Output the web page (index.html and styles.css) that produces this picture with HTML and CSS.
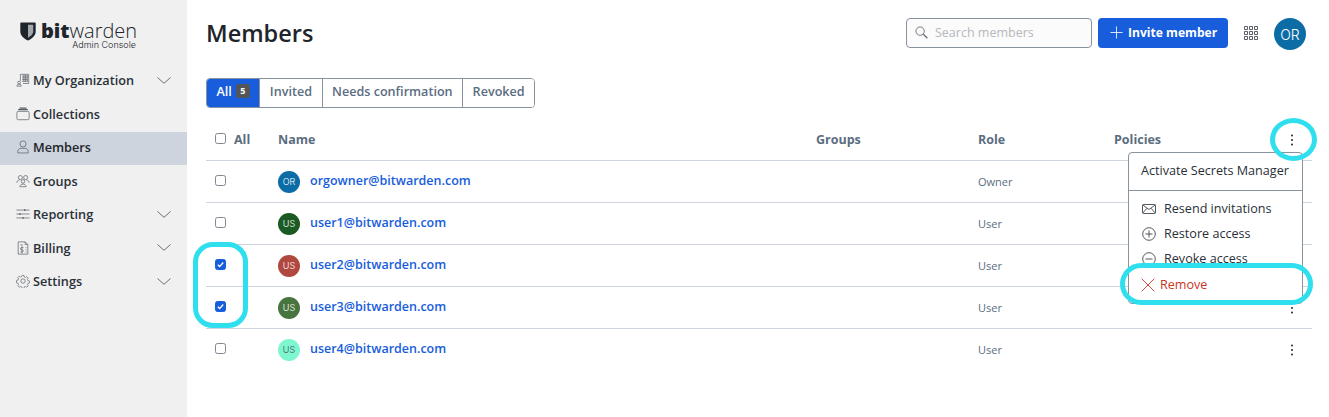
FILE: index.html
```html
<!DOCTYPE html>
<html lang="en">
<head>
<meta charset="utf-8">
<title>Members</title>
<link rel="stylesheet" href="styles.css">
</head>
<body>
<div class="app">
  <aside class="sidebar">
    <div class="logo">
      <svg class="shield" viewBox="0 0 16 19"><path d="M1 0.500h14a.7.7 0 0 1 .7.7v8.300c0 4.600-4.600 7.600-7.700 9-3.100-1.400-7.700-4.400-7.700-9V1.200a.7.7 0 0 1 .7-.7z" fill="#20242b"/><path d="M8 2.800h5.200v6.700c0 2.800-2.900 5-5.200 6.200z" fill="#a4a7ab"/></svg>
      <div class="logo-text">
        <div class="wordmark"><b>bit</b>warden</div>
        <div class="console">Admin Console</div>
      </div>
    </div>
    <nav class="nav">
      <a class="nav-item"><svg class="nav-icon" viewBox="0 0 16 16"><path d="M5 9V1.500h9.500V12H8M7 3.500h6M7 5.500h6M7 7.500h6M7 9.500h6M9 2v8M11 2v8M13 2v8" /><circle cx="3.500" cy="11" r="1.600"/><path d="M1 15c0-3 5-3 5 0z"/></svg><span class="nav-label">My Organization</span><svg class="chev" viewBox="0 0 14 7"><path d="M.5.500 7 6.300 13.500.500"/></svg></a>
      <a class="nav-item"><svg class="nav-icon" viewBox="0 0 16 16"><rect x="1" y="5" width="14" height="9.500" rx="1.500"/><path d="M2.500 3h11M4 1.200h8" stroke-width="1.400"/></svg><span class="nav-label">Collections</span></a>
      <a class="nav-item active"><svg class="nav-icon" viewBox="0 0 16 16"><circle cx="8" cy="4.500" r="3.500"/><path d="M2 14.800v-1.600c0-2.300 2-3.700 3.500-3.700h5c1.500 0 3.500 1.400 3.500 3.700v1.600z"/></svg><span class="nav-label">Members</span></a>
      <a class="nav-item"><svg class="nav-icon" viewBox="0 0 16 16"><circle cx="5" cy="4" r="2.300"/><circle cx="11" cy="4" r="2.300"/><circle cx="8" cy="8.500" r="2"/><path d="M1 10c0-2 1.500-3 3-3M15 10c0-2-1.500-3-3-3M4.500 14.500c0-4 7-4 7 0z"/></svg><span class="nav-label">Groups</span></a>
      <a class="nav-item"><svg class="nav-icon" viewBox="0 0 16 16"><path d="M.5 3.500h15M.5 8h15M.5 12.500h15"/><path d="M10 2.500v2M4.500 7v2M8 11.500v2" stroke-width="1.500"/></svg><span class="nav-label">Reporting</span><svg class="chev" viewBox="0 0 14 7"><path d="M.5.500 7 6.300 13.500.500"/></svg></a>
      <a class="nav-item"><svg class="nav-icon" viewBox="0 0 16 16"><path d="M2.500 1h8l3 3v11h-11zM10.500 1v3h3M5 4.500h3M11 7.500h1M11 10h1M11 12.500h1"/><path d="M8.500 7.500H6c-1 0-1 2.500 0 2.500h1.500c1 0 1 2.500 0 2.500H5M6.800 6v8"/></svg><span class="nav-label">Billing</span><svg class="chev" viewBox="0 0 14 7"><path d="M.5.500 7 6.300 13.500.500"/></svg></a>
      <a class="nav-item"><svg class="nav-icon" viewBox="0 0 16 16"><circle cx="8" cy="8" r="2.500"/><path d="M6.700 1h2.600l.4 2 1.400.6 1.800-1.100 1.800 1.800-1.100 1.800.6 1.400 2 .4v2.600l-2 .4-.6 1.400 1.100 1.800-1.800 1.800-1.800-1.100-1.400.6-.4 2H6.700l-.4-2-1.400-.6-1.800 1.100-1.800-1.800 1.100-1.800-.6-1.400-2-.4V7.200l2-.4.6-1.400-1.100-1.800 1.800-1.800 1.800 1.100 1.400-.6z" transform="translate(.8 .8) scale(.9)"/></svg><span class="nav-label">Settings</span><svg class="chev" viewBox="0 0 14 7"><path d="M.5.500 7 6.300 13.500.500"/></svg></a>
    </nav>
  </aside>

  <main class="main">
    <header class="topbar">
      <h1 class="title">Members</h1>
      <div class="actions">
        <label class="search">
          <svg class="search-icon" viewBox="0 0 14 14"><circle cx="5.500" cy="5.500" r="4.500"/><path d="m9 9 4.300 4.300" stroke-width="1.500"/></svg>
          <span class="search-text">Search members</span>
        </label>
        <button class="invite"><svg class="plus" viewBox="0 0 14 14"><path d="M7 .5v13M.5 7h13"/></svg>Invite member</button>
        <svg class="apps" viewBox="0 0 14 14"><path d="M.5.500h3v3h-3zM5.500.500h3v3h-3zM10.500.500h3v3h-3zM.5 5.500h3v3h-3zM5.500 5.500h3v3h-3zM10.500 5.500h3v3h-3zM.5 10.500h3v3h-3zM5.500 10.500h3v3h-3zM10.500 10.500h3v3h-3z"/></svg>
        <div class="avatar avatar-lg av-or">OR</div>
      </div>
    </header>

    <div class="tabs">
      <button class="tab tab-on">All <span class="badge">5</span></button>
      <button class="tab">Invited</button>
      <button class="tab">Needs confirmation</button>
      <button class="tab">Revoked</button>
    </div>

    <section class="table">
      <div class="row head">
        <div class="check-cell"><span class="box"></span><span>All</span></div>
        <div>Name</div>
        <div>Groups</div>
        <div>Role</div>
        <div>Policies</div>
        <div class="dots-cell"><svg class="dots" viewBox="0 0 4 12"><circle cx="2" cy="1.500" r="1"/><circle cx="2" cy="6" r="1"/><circle cx="2" cy="10.500" r="1"/></svg></div>
      </div>
      <div class="row">
        <div class="check-cell"><span class="box"></span></div>
        <div class="name-cell"><span class="avatar av-or">OR</span><a class="email">orgowner@bitwarden.com</a></div>
        <div></div><div class="role">Owner</div><div></div><div></div>
      </div>
      <div class="row">
        <div class="check-cell"><span class="box"></span></div>
        <div class="name-cell"><span class="avatar av-1">US</span><a class="email">user1@bitwarden.com</a></div>
        <div></div><div class="role">User</div><div></div><div></div>
      </div>
      <div class="row">
        <div class="check-cell"><span class="box box-on"><svg viewBox="0 0 10 10"><path d="M2 5.300 4.100 7.300 8 2.800"/></svg></span></div>
        <div class="name-cell"><span class="avatar av-2">US</span><a class="email">user2@bitwarden.com</a></div>
        <div></div><div class="role">User</div><div></div><div></div>
      </div>
      <div class="row">
        <div class="check-cell"><span class="box box-on"><svg viewBox="0 0 10 10"><path d="M2 5.300 4.100 7.300 8 2.800"/></svg></span></div>
        <div class="name-cell"><span class="avatar av-3">US</span><a class="email">user3@bitwarden.com</a></div>
        <div></div><div class="role">User</div><div></div>
        <div class="dots-cell"><svg class="dots" viewBox="0 0 4 12"><circle cx="2" cy="1.500" r="1"/><circle cx="2" cy="6" r="1"/><circle cx="2" cy="10.500" r="1"/></svg></div>
      </div>
      <div class="row last">
        <div class="check-cell"><span class="box"></span></div>
        <div class="name-cell"><span class="avatar av-4">US</span><a class="email">user4@bitwarden.com</a></div>
        <div></div><div class="role">User</div><div></div>
        <div class="dots-cell"><svg class="dots" viewBox="0 0 4 12"><circle cx="2" cy="1.500" r="1"/><circle cx="2" cy="6" r="1"/><circle cx="2" cy="10.500" r="1"/></svg></div>
      </div>
    </section>
  </main>
</div>

<div class="menu">
  <div class="menu-top">Activate Secrets Manager</div>
  <div class="menu-list">
    <div class="menu-item"><svg class="menu-icon" viewBox="0 0 14 14"><rect x=".5" y="2.500" width="13" height="9" rx="1"/><path d="m.8 3 6.200 4.500L13.200 3M.8 11 5 6.200M13.200 11 9 6.200"/></svg>Resend invitations</div>
    <div class="menu-item"><svg class="menu-icon" viewBox="0 0 14 14"><circle cx="7" cy="7" r="6.300"/><path d="M7 3.500v7M3.500 7h7"/></svg>Restore access</div>
    <div class="menu-item"><svg class="menu-icon" viewBox="0 0 14 14"><circle cx="7" cy="7" r="6.300"/><path d="M3.500 7h7"/></svg>Revoke access</div>
    <div class="menu-item danger"><svg class="x-icon" viewBox="0 0 14 14"><path d="M.7.700l12.600 12.600M13.300.700.700 13.300"/></svg>Remove</div>
  </div>
</div>

<div class="mark mark-dots"></div>
<div class="mark mark-checks"></div>
<div class="mark mark-remove"></div>
</body>
</html>
```

FILE: styles.css
```css
* { box-sizing: border-box; }
html, body { margin: 0; height: 100%; }
body {
  position: relative;
  width: 1329px;
  height: 417px;
  overflow: hidden;
  background: #fff;
  color: #20242b;
  font-family: "Open Sans", "Liberation Sans", sans-serif;
  font-size: 13px;
}
svg { display: block; fill: none; stroke: currentColor; stroke-width: 1; }

.app { display: flex; height: 417px; }

/* sidebar */
.sidebar { width: 187px; flex: none; background: #f0f0f0; }
.logo { display: flex; align-items: flex-start; gap: 5px; padding: 21px 0 0 20px; height: 64.5px; }
.shield { width: 16px; height: 19px; margin-top: 1px; stroke: none; }
.logo-text { width: 96px; }
.wordmark { font-size: 20px; line-height: 19px; font-weight: 300; color: #20242b; white-space: nowrap; }
.wordmark b { font-weight: 800; }
.console { font-family: "Inter", sans-serif; font-size: 9px; line-height: 10px; font-weight: 300; text-align: right; color: #20242b; padding-right: 1px; }
.nav-item { display: flex; align-items: center; height: 33.5px; padding: 0 16px 2px 16px; font-weight: 600; font-size: 12.700px; color: #2a2f37; }
.nav-item.active { background: #cdd4dd; color: #20242b; }
.nav-icon { width: 14px; height: 14px; flex: none; margin-right: 3px; color: #5a5f66; stroke-width: .8; }
.nav-label { flex: 1; }
.chev { width: 14px; height: 7px; color: #5a606a; stroke-width: .9; }

/* main */
.main { flex: 1; min-width: 0; padding: 18px 17px 0 19px; }
.topbar { display: flex; justify-content: space-between; align-items: flex-start; height: 60px; }
.title { margin: 0; font-size: 23.500px; line-height: 30px; font-weight: 600; color: #20242b; }
.actions { display: flex; align-items: flex-start; padding-right: 6px; }
.search { display: flex; align-items: center; width: 186px; height: 30px; padding: 0 0 2px 8px; margin-right: 6px; background: #fbfbfb; border: 1px solid #89929f; border-radius: 4px; }
.search-icon { width: 13px; height: 13px; color: #6a7078; margin-right: 7px; }
.search-text { color: #b5b8bd; font-size: 12.500px; }
.invite { display: flex; align-items: center; width: 130px; height: 30px; padding: 0 0 2px 12px; border: 0; border-radius: 4px; background: #175ddc; color: #fff; font: 700 12.100px "Open Sans", sans-serif; }
.plus { width: 13px; height: 13px; margin-right: 5px; stroke-width: .9; }
.apps { width: 14px; height: 14px; margin: 8px 16px 0 16px; color: #5a5f66; }
.avatar { display: flex; align-items: center; justify-content: center; width: 22px; height: 22px; flex: none; border-radius: 50%; color: #fff; font-size: 9px; font-family: "Inter", sans-serif; font-weight: 300; }
.avatar-lg { width: 32px; height: 32px; font-size: 14px; }
.av-or { background: #0b6ca6; }
.av-1 { background: #1b5a22; }
.av-2 { background: #b0483f; }
.av-3 { background: #48753f; }
.av-4 { background: #7ef7d0; color: #3d4a50; }

/* tabs */
.tabs { display: inline-flex; height: 30px; border: 1px solid #89929f; border-radius: 4px; overflow: hidden; vertical-align: top; }
.tab { display: flex; align-items: center; height: 100%; padding: 0 9.500px 3px; border: 0; border-left: 1px solid #89929f; background: #fff; color: #5a6d81; font: 600 12.600px "Open Sans", sans-serif; white-space: nowrap; }
.tab-on { border-left: 0; background: #175ddc; color: #fff; padding: 0 9.500px 3px; gap: 4px; }
.badge { display: flex; align-items: center; justify-content: center; width: 14px; height: 14px; margin-top: -2px; border-radius: 2px; background: #53555a; color: #fff; font-size: 9px; font-weight: 700; }

/* table */
.table { margin-top: 10px; }
.row { display: grid; grid-template-columns: 72px 538px 162px 136px 130px 1fr; align-items: center; height: 42px; border-top: 1px solid #cdd4dd; }
.row.head { height: 42px; border-top: 0; font-weight: 700; color: #5a6d81; font-size: 12.500px; padding-top: 1px; }
.check-cell { display: flex; align-items: center; gap: 8px; padding-left: 9px; }
.box { display: flex; align-items: center; justify-content: center; width: 11px; height: 11px; flex: none; margin-bottom: 2px; background: #fff; border: 1px solid #7e8792; border-radius: 2.500px; }
.check-cell span:not(.box) { margin-bottom: 0; }
.box-on { background: #175ddc; border-color: #175ddc; }
.box-on svg { width: 9px; height: 9px; flex: none; color: #fff; stroke-width: 1.500; }
.name-cell { display: flex; align-items: center; gap: 10px; }
.email { color: #175ddc; font-weight: 600; font-size: 12.500px; padding-bottom: 2px; }
.role { color: #5a6d81; font-size: 11px; }
.dots-cell { display: flex; justify-content: flex-end; padding-right: 18px; color: #20242b; }
.dots { width: 4px; height: 12px; fill: currentColor; stroke: none; }

/* floating menu */
.menu { position: absolute; left: 1128px; top: 152px; width: 175px; height: 152px; background: #fff; border: 1px solid #89929f; border-radius: 4px; font-size: 12.600px; color: #2a2f37; }
.menu-top { height: 38px; padding: 9px 0 0 12px; border-bottom: 1px solid #89929f; line-height: 17px; }
.menu-list { padding-top: 5px; }
.menu-item { display: flex; align-items: center; height: 25px; padding-left: 13px; }
.menu-icon { width: 14px; height: 14px; margin-right: 8px; flex: none; stroke-width: .8; }
.danger { color: #c83522; padding-left: 12px; margin-top: 1px; }
.x-icon { width: 14px; height: 14px; margin-right: 5px; flex: none; stroke-width: .9; }

/* annotation marks */
.mark { position: absolute; border: 5px solid #2fdfee; }
.mark-dots { left: 1270px; top: 118px; width: 47px; height: 43px; border-radius: 50%; }
.mark-checks { left: 193px; top: 242px; width: 55px; height: 86px; border-radius: 20px; }
.mark-remove { left: 1120px; top: 263px; width: 193px; height: 42px; border-radius: 21px; }
```
